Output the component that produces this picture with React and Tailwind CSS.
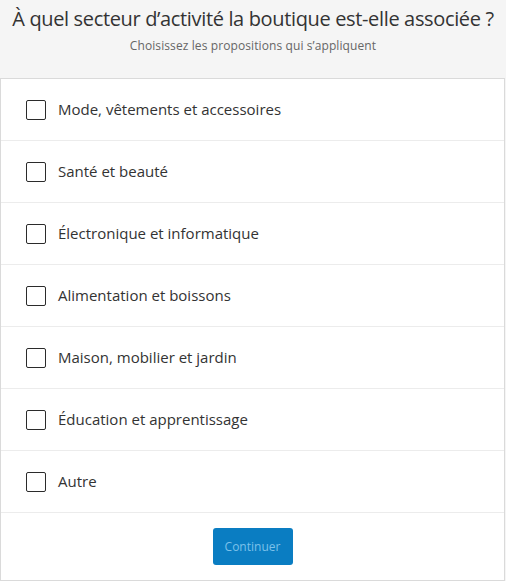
import React from "react";

const options = [
  "Mode, vêtements et accessoires",
  "Santé et beauté",
  "Électronique et informatique",
  "Alimentation et boissons",
  "Maison, mobilier et jardin",
  "Éducation et apprentissage",
  "Autre",
];

const OptionRow = ({ label }) => (
  <label className="flex items-center h-[62px] border-b border-[#ececec] pl-[25px] cursor-pointer">
    <span className="w-[20px] h-[20px] border-[1.5px] border-[#2b2b2b] rounded-[2px] bg-white shrink-0" />
    <span className="ml-[12px] text-[15px] text-[#333333]">{label}</span>
  </label>
);

export default function App() {
  return (
    <div
      className="w-[506px] h-[581px] bg-[#f5f5f5] overflow-hidden"
      style={{ fontFamily: "'Open Sans', 'Noto Sans', sans-serif" }}
    >
      <div className="pt-[5px] text-center">
        <h1 className="text-[20px] leading-[28px] text-[#333333] tracking-[-0.35px]">
          À quel secteur d’activité la boutique est-elle associée ?
        </h1>
        <p className="mt-[4px] text-[12px] leading-[18px] text-[#666666] tracking-[0.1px]">
          Choisissez les propositions qui s’appliquent
        </p>
      </div>
      <div className="mt-[23px] mr-[1px] bg-white border border-[#dadada]">
        {options.map((o) => (
          <OptionRow key={o} label={o} />
        ))}
        <div className="flex justify-center pt-[15px] pb-[15px]">
          <button className="w-[80px] h-[37px] rounded-[3px] bg-[#0a7dc2] text-[12px] text-[#7cc1ea]">
            Continuer
          </button>
        </div>
      </div>
    </div>
  );
}
